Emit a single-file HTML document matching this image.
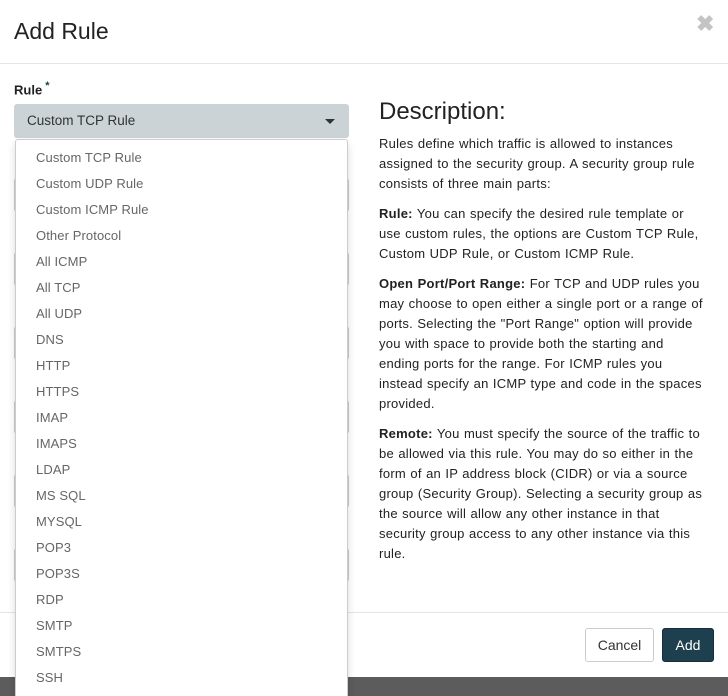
<!DOCTYPE html>
<html><head><style>
html,body{margin:0;width:728px;height:696px;overflow:hidden}
body{background:#5c5c5c;font-family:"Liberation Sans",sans-serif;position:relative}
.modal{position:absolute;left:0;top:0;width:728px;height:677px;background:#fff}
.hdr{height:63px;border-bottom:1px solid #e5e5e5;position:relative}
.hdr h1{margin:0;position:absolute;left:14px;top:18px;font-size:23px;font-weight:normal;color:#222}
.x{position:absolute;left:696px;top:11px;font-size:22px;color:#c4c4c4;font-weight:bold}
.lbl{position:absolute;left:14px;top:80px;font-size:13px;font-weight:bold;color:#222}
.lbl sup{font-size:11px;color:#1d3f4d}
.sel{position:absolute;left:14px;top:104px;width:335px;height:34px;background:#cbd3d6;border-radius:3px;box-sizing:border-box;padding:9px 13px;font-size:13.5px;color:#333}
.sel:after{content:"";position:absolute;right:14px;top:15px;border:5px solid transparent;border-top:5px solid #333;border-bottom:0}
.inp{position:absolute;left:14px;width:335px;height:34px;border:1px solid #ccc;border-radius:3px;box-sizing:border-box}
.dd{position:absolute;left:15px;top:139px;width:333px;height:580px;background:#fff;border:1px solid #ccc;border-radius:3px;box-sizing:border-box;box-shadow:0 4px 8px rgba(0,0,0,.15)}
.dd div{height:26px;line-height:26px;padding-left:20px;font-size:13px;color:#666;letter-spacing:.1px}
.desc{position:absolute;left:379px;top:98px;width:328px;font-size:13px;line-height:20px;color:#222;letter-spacing:.25px;word-spacing:.5px}
.desc h2{font-size:24px;font-weight:normal;margin:0 0 8px;line-height:28px;letter-spacing:0}
.desc p{margin:0 0 10px}
.ftr{position:absolute;left:0;top:612px;width:728px;border-top:1px solid #e5e5e5}
.btn{position:absolute;top:628px;height:34px;box-sizing:border-box;border-radius:3px;font-size:14px;line-height:32px;text-align:center}
</style></head><body>
<div class="modal">
<div class="hdr"><h1>Add Rule</h1><span class="x">✖</span></div>
<div class="lbl">Rule<sup> *</sup></div>
<div class="sel">Custom TCP Rule</div>
<div class="inp" style="top:178px"></div><div class="inp" style="top:252px"></div><div class="inp" style="top:326px"></div><div class="inp" style="top:400px"></div><div class="inp" style="top:474px"></div><div class="inp" style="top:548px"></div>
<div class="desc"><h2>Description:</h2>
<p>Rules define which traffic is allowed to instances assigned to the security group. A security group rule consists of three main parts:</p>
<p><b>Rule:</b> You can specify the desired rule template or use custom rules, the options are Custom TCP Rule, Custom UDP Rule, or Custom ICMP Rule.</p>
<p><b>Open Port/Port Range:</b> For TCP and UDP rules you may choose to open either a single port or a range of ports. Selecting the "Port Range" option will provide you with space to provide both the starting and ending ports for the range. For ICMP rules you instead specify an ICMP type and code in the spaces provided.</p>
<p><b>Remote:</b> You must specify the source of the traffic to be allowed via this rule. You may do so either in the form of an IP address block (CIDR) or via a source group (Security Group). Selecting a security group as the source will allow any other instance in that security group access to any other instance via this rule.</p></div>
<div class="ftr"></div>
<div class="btn" style="left:585px;width:69px;border:1px solid #ccc;color:#333">Cancel</div>
<div class="btn" style="left:662px;width:52px;background:#1e3f4d;color:#fff;border:1px solid #162f3a">Add</div>
</div>
<div class="dd" style="padding-top:5px">
<div>Custom TCP Rule</div><div>Custom UDP Rule</div><div>Custom ICMP Rule</div><div>Other Protocol</div><div>All ICMP</div><div>All TCP</div><div>All UDP</div><div>DNS</div><div>HTTP</div><div>HTTPS</div><div>IMAP</div><div>IMAPS</div><div>LDAP</div><div>MS SQL</div><div>MYSQL</div><div>POP3</div><div>POP3S</div><div>RDP</div><div>SMTP</div><div>SMTPS</div><div>SSH</div>
</div>
</body></html>
